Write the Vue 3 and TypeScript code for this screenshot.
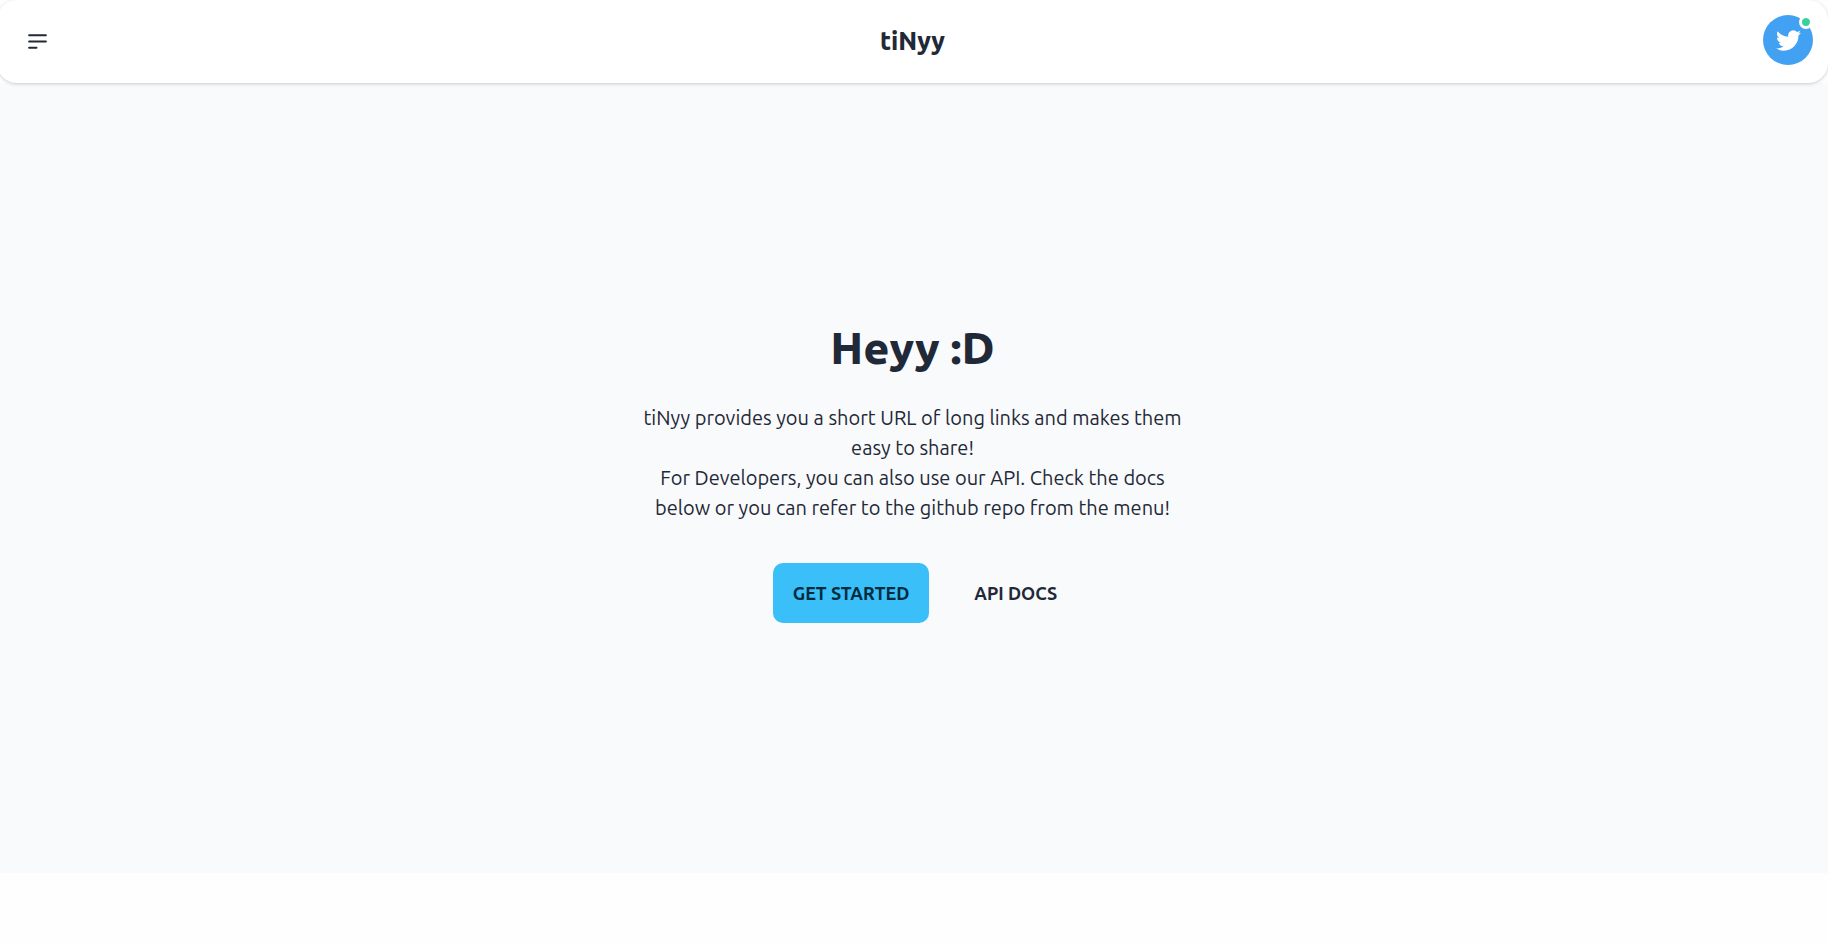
<script setup lang="ts">
interface Action {
  label: string
  primary: boolean
}

const brand = 'tiNyy'
const actions: Action[] = [
  { label: 'Get started', primary: true },
  { label: 'API docs', primary: false },
]
</script>

<template>
  <div class="page">
    <header class="navbar">
      <div class="side">
        <button class="menu" type="button" aria-label="Open menu">
          <svg viewBox="0 0 24 24" fill="none" stroke="currentColor" stroke-width="2" stroke-linecap="round" stroke-linejoin="round">
            <path d="M4 6h16M4 12h16M4 18h7" />
          </svg>
        </button>
      </div>
      <a class="brand" href="#">{{ brand }}</a>
      <div class="side end">
        <a class="avatar" href="#" aria-label="Twitter">
          <svg viewBox="0 0 24 24" fill="currentColor">
            <path d="M23.953 4.57a10 10 0 01-2.825.775 4.958 4.958 0 002.163-2.723c-.951.555-2.005.959-3.127 1.184a4.92 4.92 0 00-8.384 4.482C7.69 8.095 4.067 6.13 1.64 3.162a4.822 4.822 0 00-.666 2.475c0 1.71.87 3.213 2.188 4.096a4.904 4.904 0 01-2.228-.616v.06a4.923 4.923 0 003.946 4.827 4.996 4.996 0 01-2.212.085 4.936 4.936 0 004.604 3.417 9.867 9.867 0 01-6.102 2.105c-.39 0-.779-.023-1.17-.067a13.995 13.995 0 007.557 2.209c9.053 0 13.998-7.496 13.998-13.985 0-.21 0-.42-.015-.63A9.935 9.935 0 0024 4.59z" />
          </svg>
          <span class="status"></span>
        </a>
      </div>
    </header>

    <main class="hero">
      <div class="content">
        <h1>Heyy :D</h1>
        <p>
          tiNyy provides you a short URL of long links and makes them easy to share!<br />
          For Developers, you can also use our API. Check the docs below or you can refer to the github repo from the menu!
        </p>
        <div class="actions">
          <button v-for="action in actions" :key="action.label" type="button" :class="['btn', { primary: action.primary }]">
            {{ action.label }}
          </button>
        </div>
      </div>
    </main>

    <section class="next">
      <div class="card"></div>
    </section>
  </div>
</template>

<style>
body {
  margin: 0;
}
</style>

<style scoped>
.page {
  height: 100vh;
  margin-left: -3px;
  overflow: hidden;
  display: flex;
  flex-direction: column;
  background: #fefefe;
  color: #1f2937;
  font-family: Ubuntu, "Noto Sans", sans-serif;
  font-size: 20px;
}
.navbar {
  box-sizing: border-box;
  flex: none;
  height: 83px;
  padding: 0 15px;
  display: flex;
  align-items: center;
  background: #fff;
  border-radius: 20px;
  box-shadow: 0 1px 4px rgba(0, 0, 0, 0.14), 0 1px 2px rgba(0, 0, 0, 0.06);
  position: relative;
}
.side {
  flex: 1;
  display: flex;
}
.end {
  justify-content: flex-end;
  padding-bottom: 3px;
}
.menu {
  width: 50px;
  height: 60px;
  padding: 0;
  border: 0;
  background: none;
  color: #1f2937;
  display: flex;
  align-items: center;
  justify-content: center;
  cursor: pointer;
}
.menu svg {
  width: 25px;
  height: 25px;
}
.brand {
  color: inherit;
  text-decoration: none;
  font-size: 25px;
  line-height: 30px;
  padding-bottom: 2px;
  font-weight: 800;
}
.avatar {
  position: relative;
  width: 50px;
  height: 50px;
  border-radius: 50%;
  background: #42a1f3;
  color: #fff;
  display: flex;
  align-items: center;
  justify-content: center;
}
.avatar svg {
  width: 25px;
  height: 25px;
}
.status {
  position: absolute;
  top: 0;
  right: 0;
  width: 8px;
  height: 8px;
  border: 3px solid #fff;
  border-radius: 50%;
  background: #36d399;
  background-clip: padding-box;
}
.hero {
  flex: none;
  height: 790px;
  display: flex;
  align-items: center;
  justify-content: center;
  background: #f9fafc;
}
.content {
  max-width: 560px;
  text-align: center;
}
h1 {
  margin: 0;
  font-size: 45px;
  line-height: 50px;
  font-weight: 800;
}
p {
  margin: 0;
  padding: 30px 0 40px;
  line-height: 30px;
  font-weight: 450;
}
.actions {
  display: flex;
  justify-content: center;
  gap: 25px;
  padding: 0 0 10px 25px;
}
.btn {
  height: 60px;
  padding: 0 20px;
  border: 0;
  border-radius: 10px;
  background: transparent;
  color: #1f2937;
  font: inherit;
  font-size: 18px;
  font-weight: 700;
  text-transform: uppercase;
  cursor: pointer;
}
.primary {
  background: #3abff8;
  color: #002b3d;
}
.next {
  flex: 1;
  display: flex;
  justify-content: center;
  padding-top: 50px;
}
.card {
  width: 100%;
  max-width: 940px;
  height: 300px;
  border-radius: 20px;
  background: #fefefe;
  box-shadow: 0 1px 3px rgba(0, 0, 0, 0.01);
}
</style>
